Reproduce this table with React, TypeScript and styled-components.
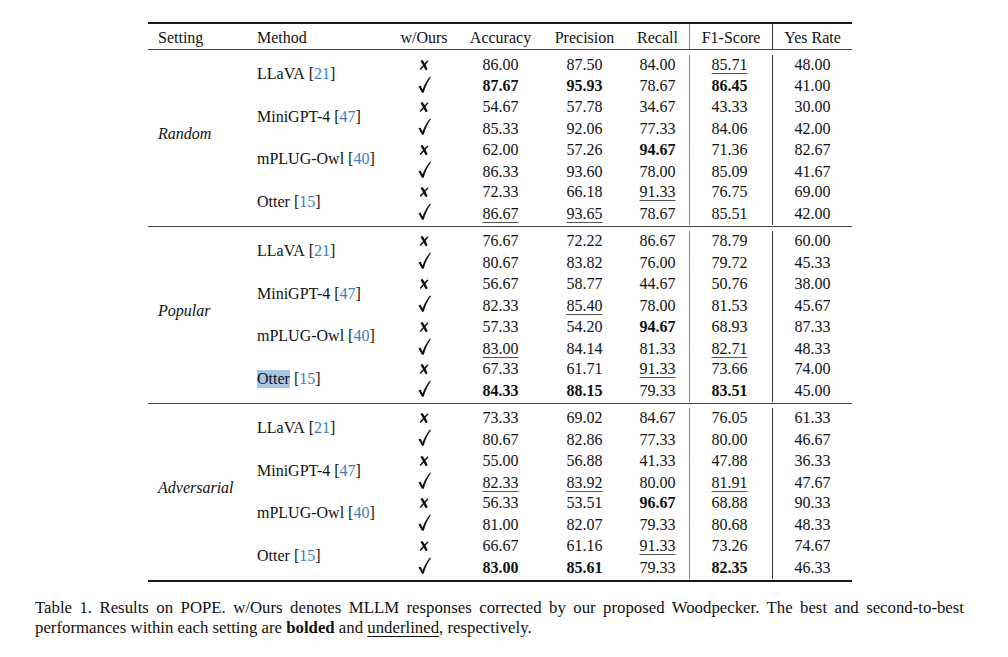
import React from "react";
import styled, { createGlobalStyle } from "styled-components";

const GlobalStyle = createGlobalStyle`
  body {
    margin: 0;
    background: #fff;
    color: #111;
    font-family: "Liberation Serif", "Times New Roman", serif;
    font-size: 16px;
  }
`;

const COLUMNS = "99px 143px 68px 85px 83px 63px 84px 79px";

type Value = number | string; // "b" prefix = bold, "u" prefix = underline
type Method = { name: string; cite: number; marked?: boolean; rows: [Value[], Value[]] };
type Section = { setting: string; methods: Method[] };

const DATA: Section[] = [
  {
    setting: "Random",
    methods: [
      { name: "LLaVA", cite: 21, rows: [["86.00", "87.50", "84.00", "u85.71", "48.00"], ["b87.67", "b95.93", "78.67", "b86.45", "41.00"]] },
      { name: "MiniGPT-4", cite: 47, rows: [["54.67", "57.78", "34.67", "43.33", "30.00"], ["85.33", "92.06", "77.33", "84.06", "42.00"]] },
      { name: "mPLUG-Owl", cite: 40, rows: [["62.00", "57.26", "b94.67", "71.36", "82.67"], ["86.33", "93.60", "78.00", "85.09", "41.67"]] },
      { name: "Otter", cite: 15, rows: [["72.33", "66.18", "u91.33", "76.75", "69.00"], ["u86.67", "u93.65", "78.67", "85.51", "42.00"]] },
    ],
  },
  {
    setting: "Popular",
    methods: [
      { name: "LLaVA", cite: 21, rows: [["76.67", "72.22", "86.67", "78.79", "60.00"], ["80.67", "83.82", "76.00", "79.72", "45.33"]] },
      { name: "MiniGPT-4", cite: 47, rows: [["56.67", "58.77", "44.67", "50.76", "38.00"], ["82.33", "u85.40", "78.00", "81.53", "45.67"]] },
      { name: "mPLUG-Owl", cite: 40, rows: [["57.33", "54.20", "b94.67", "68.93", "87.33"], ["u83.00", "84.14", "81.33", "u82.71", "48.33"]] },
      { name: "Otter", cite: 15, marked: true, rows: [["67.33", "61.71", "u91.33", "73.66", "74.00"], ["b84.33", "b88.15", "79.33", "b83.51", "45.00"]] },
    ],
  },
  {
    setting: "Adversarial",
    methods: [
      { name: "LLaVA", cite: 21, rows: [["73.33", "69.02", "84.67", "76.05", "61.33"], ["80.67", "82.86", "77.33", "80.00", "46.67"]] },
      { name: "MiniGPT-4", cite: 47, rows: [["55.00", "56.88", "41.33", "47.88", "36.33"], ["u82.33", "u83.92", "80.00", "u81.91", "47.67"]] },
      { name: "mPLUG-Owl", cite: 40, rows: [["56.33", "53.51", "b96.67", "68.88", "90.33"], ["81.00", "82.07", "79.33", "80.68", "48.33"]] },
      { name: "Otter", cite: 15, rows: [["66.67", "61.16", "u91.33", "73.26", "74.67"], ["b83.00", "b85.61", "79.33", "b82.35", "46.33"]] },
    ],
  },
];

const Page = styled.div`
  padding-top: 22px;
`;

const Table = styled.div`
  width: 704px;
  margin-left: 148px;
`;

const Rule = styled.div<{ $weight: number; $tone: string }>`
  height: ${(p) => p.$weight}px;
  background: ${(p) => p.$tone};
`;

const HeaderRow = styled.div`
  display: grid;
  grid-template-columns: ${COLUMNS};
  grid-template-rows: 25px;
`;

const Head = styled.div<{ $left?: boolean; $divided?: boolean }>`
  display: flex;
  align-items: center;
  justify-content: ${(p) => (p.$left ? "flex-start" : "center")};
  padding: 2px 0 0 ${(p) => (p.$left ? "10px" : "0")};
  line-height: 20px;
  ${(p) => p.$divided && "border-left: 1px solid #8a8a8a; border-right: 1px solid #3a3a3a;"}
`;

const Block = styled.div`
  display: grid;
  grid-template-columns: ${COLUMNS};
  grid-template-rows: repeat(4, 20px 22.6px);
  padding: 4.5px 0 1px;
`;

const SettingCell = styled.div`
  grid-column: 1;
  grid-row: 1 / span 8;
  display: flex;
  align-items: center;
  padding: 0 0 11px 10px;
  font-style: italic;
`;

const MethodCell = styled.div<{ $row: number }>`
  grid-column: 2;
  grid-row: ${(p) => p.$row} / span 2;
  display: flex;
  align-items: center;
  padding: 0 0 3px 10px;
  white-space: nowrap;
`;

const Cell = styled.div<{ $row: number; $col: number; $tall?: boolean; $divided?: boolean }>`
  grid-row: ${(p) => p.$row};
  grid-column: ${(p) => p.$col};
  display: flex;
  align-items: center;
  justify-content: center;
  line-height: 20px;
  padding-top: ${(p) => (p.$tall ? "1.4px" : "0")};
  ${(p) => p.$divided && "border-left: 1px solid #8a8a8a; border-right: 1px solid #3a3a3a; padding-right: 3px;"}
`;

const Num = styled.span<{ $bold?: boolean; $under?: boolean }>`
  font-weight: ${(p) => (p.$bold ? 700 : 400)};
  text-decoration: ${(p) => (p.$under ? "underline" : "none")};
  text-decoration-thickness: 1px;
  text-underline-offset: 3px;
  text-decoration-color: #555;
`;

const CiteNum = styled.span`
  color: #3d7cc4;
`;

const Marked = styled.span`
  background: #a7c7e6;
`;

const CheckIcon = styled.svg`
  margin-bottom: 5px;
`;

const Caption = styled.div`
  width: 929px;
  margin: 16px 0 0 35px;
  font-size: 16.8px;
  line-height: 20.5px;
`;

const CaptionLine = styled.span<{ $justify?: boolean }>`
  display: block;
  text-align: ${(p) => (p.$justify ? "justify" : "left")};
  text-align-last: ${(p) => (p.$justify ? "justify" : "auto")};
`;

const Underlined = styled.span`
  text-decoration: underline;
  text-decoration-thickness: 1px;
  text-underline-offset: 3px;
`;

const Cross = () => (
  <svg width="10" height="10" viewBox="0 0 10 10" fill="none" stroke="#111" strokeLinecap="round">
    <path d="M3 1.3 Q5.2 4.4 7.2 8.8" strokeWidth="2.4" />
    <path d="M8.6 1.2 Q5.4 4.6 1.6 8.9" strokeWidth="1.5" />
  </svg>
);

const Check = () => (
  <CheckIcon width="13" height="17" viewBox="0 0 13 17">
    <path
      d="M0.5 10.6 L2.4 9.6 L4.6 13.6 C6.4 8.4 8.9 4.1 12.1 0.5 L12.9 1.3 C9.8 5.4 7.4 10.7 5.7 16.8 L4 16.8 Z"
      fill="#111"
    />
  </CheckIcon>
);

const renderValue = (v: Value) => {
  const s = String(v);
  const bold = s.startsWith("b");
  const under = s.startsWith("u");
  return (
    <Num $bold={bold} $under={under}>
      {bold || under ? s.slice(1) : s}
    </Num>
  );
};

const SectionBlock = ({ section }: { section: Section }) => (
  <Block>
    <SettingCell>{section.setting}</SettingCell>
    {section.methods.map((m, mi) => {
      const start = mi * 2 + 1;
      return (
        <React.Fragment key={m.name}>
          <MethodCell $row={start}>
            {m.marked ? <Marked>{m.name}</Marked> : m.name}&nbsp;[<CiteNum>{m.cite}</CiteNum>]
          </MethodCell>
          {m.rows.map((row, ri) => {
            const r = start + ri;
            const tall = ri === 1;
            return (
              <React.Fragment key={ri}>
                <Cell $row={r} $col={3} $tall={tall}>
                  {tall ? <Check /> : <Cross />}
                </Cell>
                {row.map((v, ci) => (
                  <Cell key={ci} $row={r} $col={ci + 4} $tall={tall} $divided={ci === 3}>
                    {renderValue(v)}
                  </Cell>
                ))}
              </React.Fragment>
            );
          })}
        </React.Fragment>
      );
    })}
  </Block>
);

export default function App() {
  return (
    <Page>
      <GlobalStyle />
      <Table>
        <Rule $weight={2} $tone="#1a1a1a" />
        <HeaderRow>
          <Head $left>Setting</Head>
          <Head $left>Method</Head>
          <Head>w/Ours</Head>
          <Head>Accuracy</Head>
          <Head>Precision</Head>
          <Head>Recall</Head>
          <Head $divided>F1-Score</Head>
          <Head>Yes Rate</Head>
        </HeaderRow>
        <Rule $weight={1} $tone="#444" />
        {DATA.map((section, i) => (
          <React.Fragment key={section.setting}>
            {i > 0 && <Rule $weight={1} $tone="#444" />}
            <SectionBlock section={section} />
          </React.Fragment>
        ))}
        <Rule $weight={2} $tone="#1a1a1a" />
      </Table>
      <Caption>
        <CaptionLine $justify>
          Table 1. Results on POPE. w/Ours denotes MLLM responses corrected by our proposed Woodpecker. The best and
          second-to-best
        </CaptionLine>
        <CaptionLine>
          performances within each setting are <b>bolded</b> and <Underlined>underlined</Underlined>, respectively.
        </CaptionLine>
      </Caption>
    </Page>
  );
}
